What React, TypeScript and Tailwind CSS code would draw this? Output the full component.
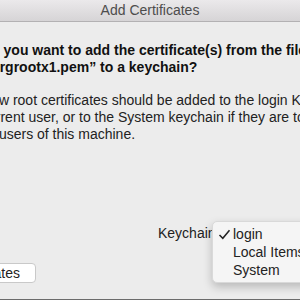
import React from "react";

export default function App() {
  return (
    <div
      className="relative w-[300px] h-[300px] overflow-hidden bg-[#ececec] flex flex-col"
      style={{ fontFamily: '"Liberation Sans", Arial, sans-serif' }}
    >
      <div className="h-[22px] shrink-0 border-b border-[#b3b1b3] bg-gradient-to-b from-[#ebe9eb] to-[#d6d4d6] flex items-center justify-center text-[14px] text-[#4d4d4d]">
        Add Certificates
      </div>

      <div className="mt-[20px] ml-[-19px] whitespace-nowrap font-bold text-[14px] leading-[17px] text-[#111]">
        <div>Do you want to add the certificate(s) from the file</div>
        <div>“isrgrootx1.pem” to a keychain?</div>
      </div>

      <div className="mt-[16px] ml-[-19px] whitespace-nowrap text-[14px] leading-[17px] text-[#222]">
        <div>New root certificates should be added to the login Keychain for the</div>
        <div>current user, or to the System keychain if they are to be used by</div>
        <div>all users of this machine.</div>
      </div>

      <div className="mt-[82px] pl-[158px] h-[17px] text-[14px] leading-[17px] text-[#222] whitespace-nowrap">
        Keychain
      </div>

      <div className="mt-[21px] flex">
        <div className="ml-[-101px] w-[137px] h-[20px] shrink-0 rounded-[4px] bg-white border border-[#c9c9c9] flex items-center justify-end pr-[15px] text-[14px] text-[#222] whitespace-nowrap">
          View Certificates
        </div>
      </div>

      <div className="mt-auto h-[1px] bg-[#6b6b6b]" />

      <div className="absolute left-[212px] top-[221px] w-[110px] rounded-[5px] bg-[#f5f5f5] border border-[#d9d9d9] shadow-[0_4px_10px_rgba(0,0,0,0.22)] py-[3px] text-[14px] text-[#222]">
        <div className="h-[18px] flex items-center">
          <svg width="13" height="11" viewBox="0 0 13 11" className="ml-[5px] mr-[2px]">
            <path d="M1.5 6 L4.8 9.3 L11.5 1.2" fill="none" stroke="#222" strokeWidth="1.5" />
          </svg>
          <span>login</span>
        </div>
        <div className="h-[18px] flex items-center pl-[20px] whitespace-nowrap">Local Items</div>
        <div className="h-[18px] flex items-center pl-[20px]">System</div>
      </div>
    </div>
  );
}
